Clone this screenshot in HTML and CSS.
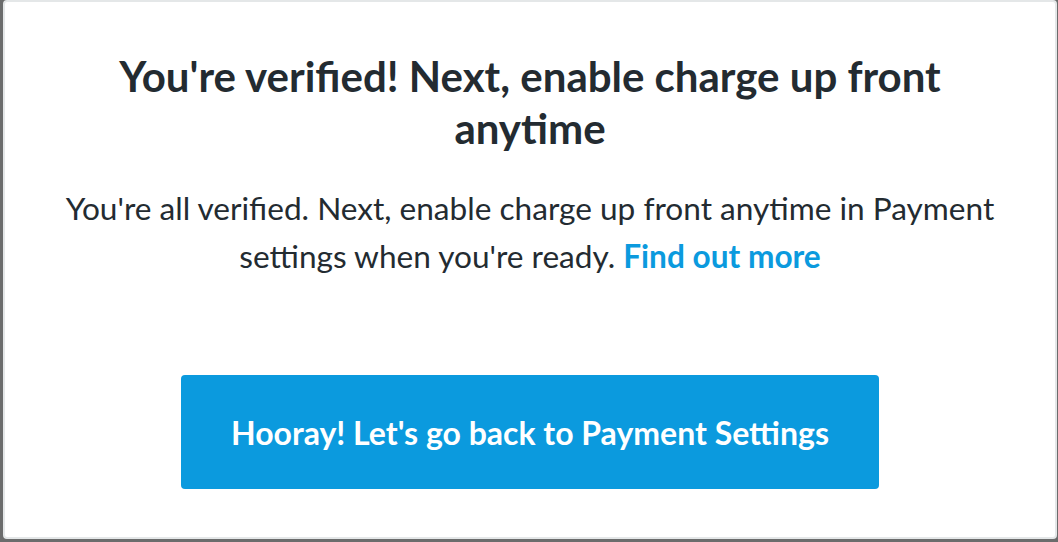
FILE: index.html
```html
<!DOCTYPE html>
<html lang="en">
<head>
    <meta charset="UTF-8">
    <title>Payment Settings</title>
    <link rel="stylesheet" href="styles.css">
</head>
<body>
    <!-- Verification Modal -->
    <div class="modal">
        <h1 class="modal-title">You're verified! Next, enable charge up front anytime</h1>
        <p class="modal-text">
            You're all verified. Next, enable charge up front anytime in Payment settings when you're ready.
            <a href="#" class="modal-link">Find out more</a>
        </p>
        <button class="modal-button">Hooray! Let's go back to Payment Settings</button>
    </div>
</body>
</html>
```

FILE: styles.css
```css
/* === Shared Styles === */
:root {
    --primary: #0b9ade;
    --text-color: #232b31;
    --backdrop: #6b6c6c;
    --border: #e4e7e8;
    --radius: 4px;
}

* {
    margin: 0;
    padding: 0;
    box-sizing: border-box;
    font-family: 'Lato', sans-serif;
}

html,
body {
    height: 100%;
}

body {
    background: var(--backdrop);
    color: var(--text-color);
    padding: 0 1px 3px 3px;
    overflow: hidden;
}

/* Modal */
.modal {
    height: 100%;
    background: #ffffff;
    border: 2px solid var(--border);
    border-radius: var(--radius);
    padding: 48px 52px;
    display: flex;
    flex-direction: column;
    align-items: center;
    text-align: center;
}

.modal-title {
    font-size: 42px;
    font-weight: 700;
    line-height: 52px;
}

.modal-text {
    margin-top: 30px;
    font-size: 31.6px;
    line-height: 48px;
}

.modal-link {
    color: var(--primary);
    font-weight: 700;
    text-decoration: none;
}

.modal-button {
    margin-top: 95px;
    width: 698px;
    height: 114px;
    background: var(--primary);
    color: #ffffff;
    border: none;
    border-radius: var(--radius);
    font-size: 32px;
    font-weight: 700;
    cursor: pointer;
}
```
